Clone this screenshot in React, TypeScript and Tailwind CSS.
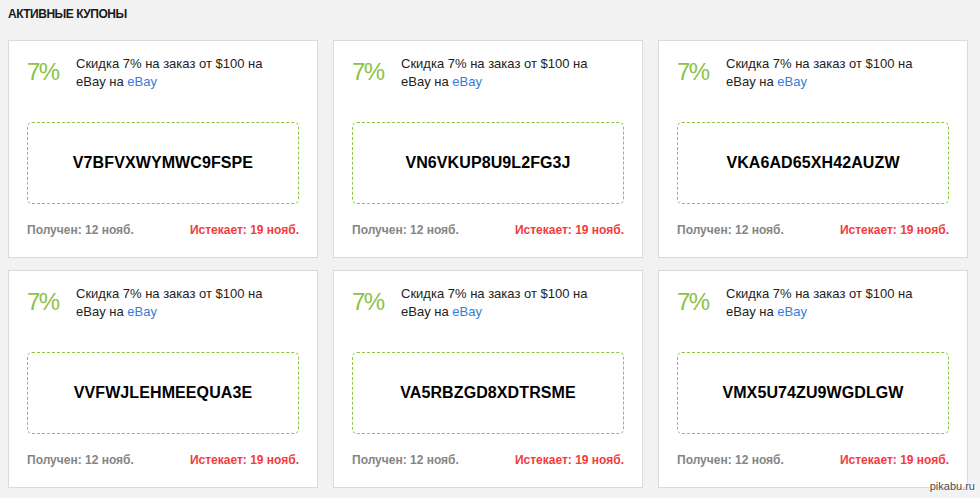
import React from "react";

const codes = [
  "V7BFVXWYMWC9FSPE",
  "VN6VKUP8U9L2FG3J",
  "VKA6AD65XH42AUZW",
  "VVFWJLEHMEEQUA3E",
  "VA5RBZGD8XDTRSME",
  "VMX5U74ZU9WGDLGW",
];

function Coupon({ code }: { code: string }) {
  return (
    <div className="h-[218px] bg-white border border-[#dadada] px-[18px] pt-[13px] flex flex-col">
      <div className="flex">
        <div className="w-[49px] shrink-0 mt-[5px] text-[24px] leading-[25px] tracking-[-1.5px] text-[#8cc24a]">7%</div>
        <div className="mt-[1px] text-[13px] leading-[18px] text-[#222]">
          Скидка 7% на заказ от $100 на
          <br />
          eBay на <span className="text-[#3a7bd5]">eBay</span>
        </div>
      </div>
      <div className="mt-[31px] h-[82px] border border-dashed border-[#8cc63f] rounded-[5px] flex items-center justify-center">
        <span className="text-[16px] font-bold text-black tracking-[0.1px]">{code}</span>
      </div>
      <div className="mt-[18px] flex justify-between text-[12px] leading-[16px] font-bold">
        <span className="text-[#858585]">Получен: 12 нояб.</span>
        <span className="text-[#f03c3c]">Истекает: 19 нояб.</span>
      </div>
    </div>
  );
}

export default function App() {
  return (
    <div
      className="relative w-[980px] h-[498px] bg-[#f2f2f2] px-[8px] overflow-hidden"
      style={{ fontFamily: '"Liberation Sans", Arial, sans-serif' }}
    >
      <div className="h-[40px] pt-[6px]">
        <div className="text-[12px] leading-[16px] font-bold tracking-[-0.5px] text-[#1a1a1a] uppercase">Активные купоны</div>
      </div>
      <div className="grid grid-cols-[310px_310px_310px] gap-x-[15px] gap-y-[12px]">
        {codes.map((c) => (
          <Coupon key={c} code={c} />
        ))}
      </div>
      <div className="absolute right-[5px] bottom-[5px] text-[11px] leading-[13px] text-[#4a4a4a] [text-shadow:0_0_1px_#fff,0_0_2px_#fff,0_0_2px_#fff]">
        pikabu.ru
      </div>
    </div>
  );
}
